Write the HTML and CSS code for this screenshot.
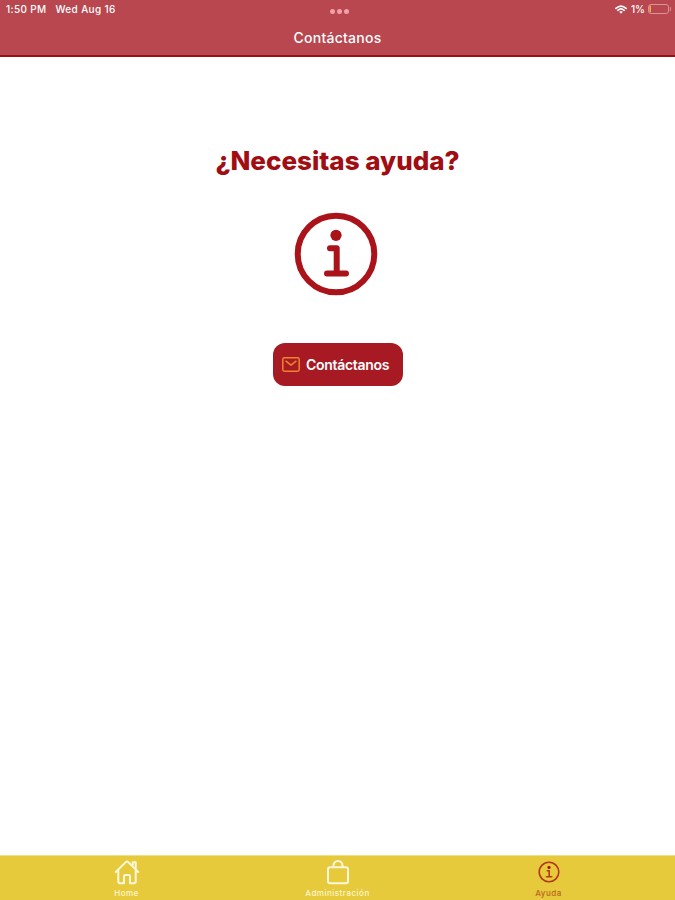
FILE: index.html
```html
<!DOCTYPE html>
<html lang="es">

<head>
  <meta charset="UTF-8">
  <meta name="viewport" content="width=device-width, initial-scale=1.0">
  <title>Contáctanos</title>
  <link rel="stylesheet" href="styles.css">
</head>

<body>

  <header class="header">
    <div class="status-bar">
      <div class="status-left">
        <span class="time">1:50 PM</span>
        <span class="date">Wed Aug 16</span>
      </div>
      <div class="dots"><i></i><i></i><i></i></div>
      <div class="status-right">
        <svg class="wifi" viewBox="0 0 12 9">
          <path d="M0.9 3.4 Q6 -1.2 11.1 3.4" />
          <path d="M2.8 5.3 Q6 2.4 9.2 5.3" />
          <path class="wifi-dot" d="M4.2 6.8 Q6 5.3 7.8 6.8 L6 8.8 Z" />
        </svg>
        <span class="percent">1%</span>
        <svg class="battery" viewBox="0 0 24 10">
          <rect x="0.5" y="0.5" width="20" height="9" rx="2.4" />
          <path class="charge" d="M2.2 2.2 V7.8" />
          <path d="M22.4 3.5 V6.5" />
        </svg>
      </div>
    </div>
    <h1 class="title">Contáctanos</h1>
  </header>

  <main class="content">
    <h2 class="question">¿Necesitas ayuda?</h2>

    <svg class="info-icon" viewBox="0 0 84 84">
      <circle cx="42" cy="42" r="38.3" />
      <circle class="info-dot" cx="42" cy="23.3" r="5.6" />
      <path d="M36 36.3 H42.7 V61.5 M33 61.5 H52" />
    </svg>

    <button class="contact-button">
      <svg class="mail-icon" viewBox="0 0 18 15">
        <rect x="0.8" y="0.8" width="16.4" height="13.4" rx="1.6" />
        <path d="M4 4.2 L9 8.2 L14 4.2" />
      </svg>
      <span>Contáctanos</span>
    </button>
  </main>

  <nav class="tab-bar">
    <a class="tab">
      <svg class="tab-icon" viewBox="0 0 26 26">
        <path d="M1.8 13 L12 2.9 Q13 2 14 2.9 L24.2 13 M18.7 7 V3.2 H21.7 V10 M4.3 11.2 V22.6 Q4.3 24.3 6 24.3 H10 V17.2 Q10 16 11.2 16 H14.8 Q16 16 16 17.2 V24.3 H20 Q21.7 24.3 21.7 22.6 V11.2" />
      </svg>
      <span>Home</span>
    </a>
    <a class="tab">
      <svg class="tab-icon" viewBox="0 0 26 26">
        <rect x="3" y="8.3" width="20" height="16" rx="2.2" />
        <path d="M8.5 8 V6.5 A4.5 4.5 0 0 1 17.5 6.5 V8" />
      </svg>
      <span>Administración</span>
    </a>
    <a class="tab active">
      <svg class="tab-icon" viewBox="0 0 26 26">
        <circle cx="13" cy="13" r="9.8" />
        <circle class="info-dot" cx="13" cy="8.4" r="1.6" />
        <path d="M11.3 11.8 H13.2 V17.8 M10.5 17.8 H15.8" />
      </svg>
      <span>Ayuda</span>
    </a>
  </nav>

</body>

</html>
```
FILE: styles.css
```css
body {
  margin: 0;
  height: 100vh;
  display: flex;
  flex-direction: column;
  background: #fff;
  font-family: Inter, "Liberation Sans", sans-serif;
}

svg {
  display: block;
  fill: none;
  stroke-linecap: round;
  stroke-linejoin: round;
}

.header {
  box-sizing: border-box;
  height: 57px;
  background: #b8474f;
  border-bottom: 2px solid #9b1014;
  color: #fff;
}

.status-bar {
  display: grid;
  grid-template-columns: 1fr auto 1fr;
  align-items: center;
  height: 18px;
  padding: 0 3px 0 6px;
  font-size: 10px;
  font-weight: 500;
}

.status-left,
.status-right {
  display: flex;
  align-items: center;
}

.status-left {
  gap: 9px;
  letter-spacing: 0.35px;
}

.status-right {
  justify-content: flex-end;
}

.dots {
  display: flex;
  gap: 2px;
  padding-top: 5px;
}

.dots i {
  width: 5px;
  height: 5px;
  border-radius: 50%;
  background: #f5a0a7;
}

.wifi {
  width: 12px;
  height: 9px;
  margin-right: 4px;
  stroke: #fff;
  stroke-width: 1.7;
}

.wifi-dot {
  fill: #fff;
  stroke: none;
}

.percent {
  margin-right: 3px;
}

.battery {
  width: 24px;
  height: 10px;
  stroke: #dc9297;
}

.charge {
  stroke: #f0b455;
  stroke-width: 1.5;
}

.title {
  margin: 11px 0 0;
  font-size: 14px;
  line-height: 18px;
  font-weight: 500;
  letter-spacing: 0.25px;
  text-align: center;
}

.content {
  flex: 1;
  display: flex;
  flex-direction: column;
  align-items: center;
}

.question {
  margin: 88px 0 0;
  font-size: 26px;
  line-height: 32px;
  font-weight: 800;
  color: #a00d12;
}

.info-icon {
  width: 84px;
  height: 84px;
  margin: 35px 3px 0 0;
  stroke: #aa131a;
  stroke-width: 6;
}

.info-dot {
  fill: #aa131a;
  stroke: none;
}

.contact-button {
  display: flex;
  align-items: center;
  gap: 6px;
  box-sizing: border-box;
  width: 130px;
  height: 43px;
  margin: 47px 0 0 1px;
  padding: 0 0 0 9px;
  border: none;
  border-radius: 12px;
  background: #a71a23;
  color: #fff;
  font-family: inherit;
  font-size: 14px;
  font-weight: 600;
  letter-spacing: -0.3px;
  white-space: nowrap;
}

.mail-icon {
  width: 18px;
  height: 15px;
  stroke: #ee842c;
  stroke-width: 1.5;
}

.tab-bar {
  display: flex;
  box-sizing: border-box;
  height: 45px;
  padding: 0 21px;
  border-top: 1px solid #f0df83;
  background: #e7ca3b;
}

.tab {
  flex: 1;
  display: flex;
  flex-direction: column;
  align-items: center;
  padding-top: 3px;
  color: #fdf7d0;
  font-size: 8px;
  line-height: 10px;
  font-weight: 500;
  letter-spacing: 0.5px;
}

.tab-icon {
  width: 26px;
  height: 26px;
  margin-bottom: 3px;
  stroke: #fdf8dc;
  stroke-width: 2;
}

.active {
  color: #b9651f;
}

.active .tab-icon {
  stroke: #b03a18;
  stroke-width: 1.6;
}
```
